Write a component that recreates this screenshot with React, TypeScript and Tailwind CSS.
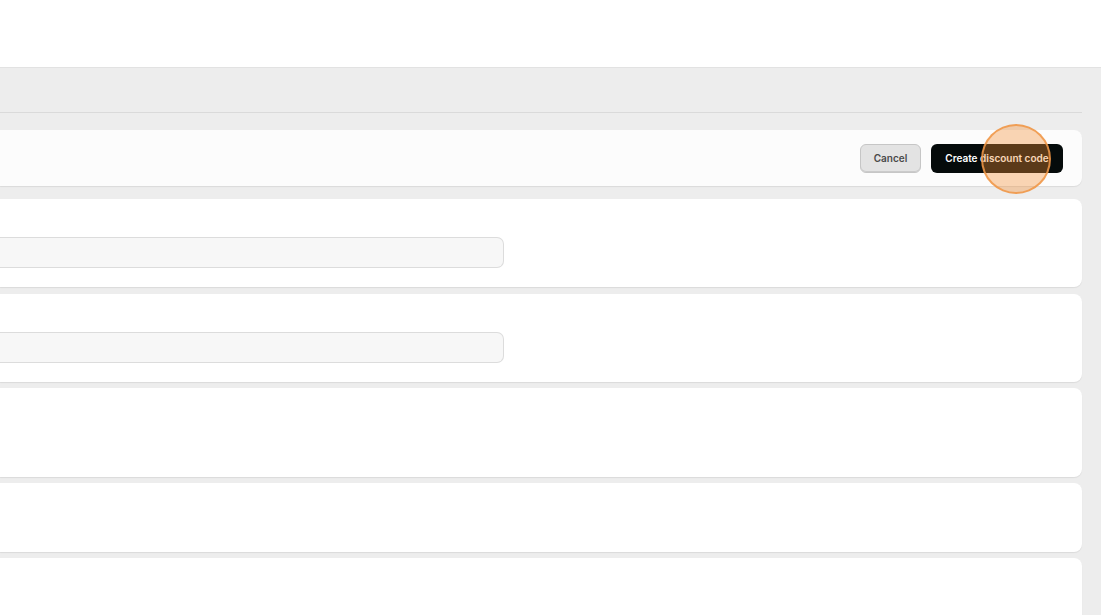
import React from "react";

function Card({ className = "", children }: { className?: string; children?: React.ReactNode }) {
  return (
    <div
      className={`bg-white rounded-r-[8px] shadow-[0_1px_1px_rgba(0,0,0,0.08)] ${className}`}
    >
      {children}
    </div>
  );
}

function Field() {
  return (
    <div className="w-[504px] h-[31px] bg-[#f7f7f7] border border-[#dcdcdc] border-l-0 rounded-r-[7px]" />
  );
}

export default function App() {
  return (
    <div
      className="relative w-[1101px] h-[615px] overflow-hidden bg-[#ededed]"
      style={{ fontFamily: "Inter, 'Liberation Sans', sans-serif" }}
    >
      <div className="h-[68px] bg-white border-b border-[#e2e2e2]" />
      <div className="w-[1082px]">
        <div className="h-[45px] border-b border-[#dadada]" />
        <div className="mt-[17px] flex flex-col">
          <div className="h-[56px] bg-[#fcfcfc] rounded-r-[8px] shadow-[0_1px_1px_rgba(0,0,0,0.08)] flex items-center justify-end gap-[10px] pr-[19px]">
            <button className="h-[29px] w-[61px] rounded-[6px] bg-[#e3e3e3] border border-[#c6c6c6] text-[10px] font-semibold text-[#4a4a4a] shadow-[inset_0_-1px_0_rgba(0,0,0,0.1)]">
              Cancel
            </button>
            <button className="h-[29px] w-[132px] rounded-[6px] bg-[#050b0b] text-[10px] font-semibold text-white">
              Create discount code
            </button>
          </div>
          <Card className="mt-[13px] h-[88px] pt-[38px]">
            <Field />
          </Card>
          <Card className="mt-[7px] h-[88px] pt-[38px]">
            <Field />
          </Card>
          <Card className="mt-[6px] h-[89px]" />
          <Card className="mt-[6px] h-[69px]" />
          <Card className="mt-[6px] h-[80px]" />
        </div>
      </div>
      <div className="absolute left-[981px] top-[124px] w-[70px] h-[70px] rounded-full bg-[rgba(245,140,50,0.36)] border-2 border-[rgba(240,150,70,0.85)]" />
    </div>
  );
}
